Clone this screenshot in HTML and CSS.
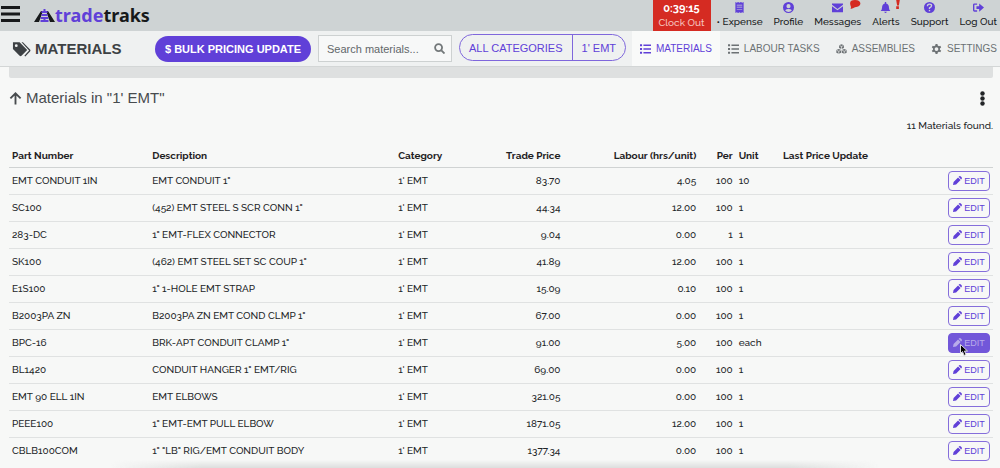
FILE: index.html
```html
<!DOCTYPE html>
<html lang="en">
<head>
<meta charset="utf-8">
<title>Materials - tradetraks</title>
<link rel="stylesheet" href="styles.css">
</head>
<body>
<svg class="defs" aria-hidden="true">
  <symbol id="pencil" viewBox="0 0 16 16"><path d="M0 16l1-5.500L9 2.500 13.500 7l-8 8zM10 1.500q2-2.500 4-.7l1.200 1.200q1.800 2-.7 4z"/></symbol>
  <symbol id="list" viewBox="0 0 16 14"><path d="M0 0h3v3H0zM5 .5h11v2H5zM0 5.500h3v3H0zM5 6h11v2H5zM0 11h3v3H0zM5 11.500h11v2H5z"/></symbol>
</svg>
<header class="topbar">
  <button class="menu" aria-label="Menu"><svg viewBox="0 0 19 18"><path d="M0 1h19v3H0zM0 7.500h19v3H0zM0 14h19v3H0z"/></svg></button>
  <a class="logo" href="#"><svg viewBox="0 0 21 14"><path d="M7 2h2L5 13H0zM12 2h2l7 11h-5z"/><path class="accent" d="M9.500 0h2v2h2v2h-6V2h2zM7.500 5h6v2h-6zM7 8h7l.5 2h-8zM9.500 10h2v1h3v2h-8v-2h3z"/></svg><span class="accent">trade</span><span>traks</span></a>
  <button class="clock"><strong>0:39:15</strong><span>Clock Out</span></button>
  <nav class="topnav">
    <a href="#"><svg viewBox="0 0 16 16"><path fill-rule="evenodd" d="M2 0l2 1 2-1 2 1 2-1 2 1 2-1v16l-2-1-2 1-2-1-2 1-2-1-2 1zM4 4v1h8V4zM4 7v1h8V7zM4 10v1h8v-1z"/></svg><span>• Expense</span></a>
    <a href="#"><svg viewBox="0 0 16 16"><path fill-rule="evenodd" d="M8 0a8 8 0 100 16A8 8 0 008 0zm0 3a3 3 0 110 6 3 3 0 010-6zM3 12q2-2 5-2t5 2q-2 2.500-5 2.500T3 12z"/></svg><span>Profile</span></a>
    <a href="#"><svg viewBox="0 0 16 16"><path d="M0 2h16v2L8 10 0 4zM0 6l8 6 8-6v9H0z"/></svg><svg class="badge" viewBox="0 0 12 10"><path d="M6 0c8 0 8 8 0 8Q4 9 1 10q1-2 0-4-2-6 5-6z"/></svg><span>Messages</span></a>
    <a href="#"><svg viewBox="0 0 16 16"><path d="M7 0h2v2q4 1 4 6 0 3 2 5H1q2-2 2-5 0-5 4-6zM6 14h4q-2 4-4 0z"/></svg><svg class="badge" viewBox="0 0 12 10"><path d="M4 0h4L7 6H5zM4 7h3v3H4z"/></svg><span>Alerts</span></a>
    <a href="#"><svg viewBox="0 0 16 16"><circle cx="8" cy="8" r="8"/><path class="cut" d="M5 6q0-3 3-3t3 2.500Q11 7 8 8.500V10"/><path class="cut" d="M8 11.500v2"/></svg><span>Support</span></a>
    <a href="#"><svg viewBox="0 0 16 16"><path d="M6 2v2H2v8h4v2H2q-2 0-2-2V4q0-2 2-2zM9 2l7 6-7 6v-4H5V6h4z"/></svg><span>Log Out</span></a>
  </nav>
</header>
<div class="toolbar">
  <h1><svg viewBox="0 0 20 16"><path fill-rule="evenodd" d="M1 1h7l8 8-6 6q-1 1-2 0L1 8zM4.500 3a1.500 1.500 0 100 3 1.500 1.500 0 000-3z"/><path d="M10 1h1.500L19 8.500q1 .8 0 2L14 16l-1-1 5-5.500z"/></svg>MATERIALS</h1>
  <button class="bulk">$ BULK PRICING UPDATE</button>
  <label class="search"><input type="text" placeholder="Search materials..." aria-label="Search materials"><svg viewBox="0 0 12 12"><circle cx="5" cy="5" r="3.800"/><path d="M8 8l3.500 3.500"/></svg></label>
  <div class="crumbs"><button>ALL CATEGORIES</button><button>1' EMT</button></div>
  <nav class="tabs">
    <a class="active" href="#"><svg><use href="#list"/></svg>MATERIALS</a>
    <a href="#"><svg><use href="#list"/></svg>LABOUR TASKS</a>
    <a href="#"><svg viewBox="0 0 16 14"><path d="M8 0l3.500 1.500v4L8 7 4.500 5.500v-4zM4 7l3.500 1.500v4L4 14 .5 12.500v-4zM12 7l3.500 1.500v4L12 14l-3.500-1.500v-4z"/><path class="facet" d="M5 2l3 1.300L11 2M8 3.300V7M1 9l3 1.300L7 9M4 10.300V14M9 9l3 1.300L15 9M12 10.300V14"/></svg>ASSEMBLIES</a>
    <a href="#"><svg viewBox="0 0 16 16"><path fill-rule="evenodd" d="M6.500 0h3l.5 2.500 2 1L14 2.700l1.500 2.600-2 1.700v2l2 1.700-1.500 2.600-2-.8-2 1-.5 2.500h-3L6 13.500l-2-1-2 .8-1.500-2.600 2-1.700V7l-2-1.700L2 2.700l2 .8 2-1zM8 5a3 3 0 100 6 3 3 0 000-6z"/></svg>SETTINGS</a>
  </nav>
</div>
<main>
  <div class="strip"></div>
  <div class="heading">
    <h2><svg viewBox="0 0 14 14"><path d="M7 14V2M1.500 7.500L7 2l5.500 5.500"/></svg>Materials in "1' EMT"</h2>
    <button class="more" aria-label="More"><svg viewBox="0 0 5 15"><circle cx="2.500" cy="2.500" r="2.200"/><circle cx="2.500" cy="7.500" r="2.200"/><circle cx="2.500" cy="12.500" r="2.200"/></svg></button>
  </div>
  <p class="found">11 Materials found.</p>
  <table>
    <colgroup><col class="c-part"><col class="c-desc"><col class="c-cat"><col class="c-price"><col class="c-labour"><col class="c-per"><col class="c-unit"><col><col class="c-edit"></colgroup>
    <thead><tr><th>Part Number</th><th>Description</th><th>Category</th><th class="num">Trade Price</th><th class="num">Labour (hrs/unit)</th><th class="num">Per</th><th>Unit</th><th>Last Price Update</th><th></th></tr></thead>
    <tbody>
      <tr><td>EMT CONDUIT 1IN</td><td>EMT CONDUIT 1"</td><td>1' EMT</td><td class="num">83.70</td><td class="num">4.05</td><td class="num">100</td><td>10</td><td></td><td class="num"><button class="edit"><svg><use href="#pencil"/></svg>EDIT</button></td></tr>
      <tr><td>SC100</td><td>(452) EMT STEEL S SCR CONN 1"</td><td>1' EMT</td><td class="num">44.34</td><td class="num">12.00</td><td class="num">100</td><td>1</td><td></td><td class="num"><button class="edit"><svg><use href="#pencil"/></svg>EDIT</button></td></tr>
      <tr><td>283-DC</td><td>1" EMT-FLEX CONNECTOR</td><td>1' EMT</td><td class="num">9.04</td><td class="num">0.00</td><td class="num">1</td><td>1</td><td></td><td class="num"><button class="edit"><svg><use href="#pencil"/></svg>EDIT</button></td></tr>
      <tr><td>SK100</td><td>(462) EMT STEEL SET SC COUP 1"</td><td>1' EMT</td><td class="num">41.89</td><td class="num">12.00</td><td class="num">100</td><td>1</td><td></td><td class="num"><button class="edit"><svg><use href="#pencil"/></svg>EDIT</button></td></tr>
      <tr><td>E1S100</td><td>1" 1-HOLE EMT STRAP</td><td>1' EMT</td><td class="num">15.09</td><td class="num">0.10</td><td class="num">100</td><td>1</td><td></td><td class="num"><button class="edit"><svg><use href="#pencil"/></svg>EDIT</button></td></tr>
      <tr><td>B2003PA ZN</td><td>B2003PA ZN EMT COND CLMP 1"</td><td>1' EMT</td><td class="num">67.00</td><td class="num">0.00</td><td class="num">100</td><td>1</td><td></td><td class="num"><button class="edit"><svg><use href="#pencil"/></svg>EDIT</button></td></tr>
      <tr><td>BPC-16</td><td>BRK-APT CONDUIT CLAMP 1"</td><td>1' EMT</td><td class="num">91.00</td><td class="num">5.00</td><td class="num">100</td><td>each</td><td></td><td class="num"><button class="edit hovered"><svg><use href="#pencil"/></svg>EDIT<svg class="cursor" viewBox="0 0 8 12"><path d="M.5.5v9l2-2 1.500 4 2-1-1.500-3.500h3z"/></svg></button></td></tr>
      <tr><td>BL1420</td><td>CONDUIT HANGER 1" EMT/RIG</td><td>1' EMT</td><td class="num">69.00</td><td class="num">0.00</td><td class="num">100</td><td>1</td><td></td><td class="num"><button class="edit"><svg><use href="#pencil"/></svg>EDIT</button></td></tr>
      <tr><td>EMT 90 ELL 1IN</td><td>EMT ELBOWS</td><td>1' EMT</td><td class="num">321.05</td><td class="num">0.00</td><td class="num">100</td><td>1</td><td></td><td class="num"><button class="edit"><svg><use href="#pencil"/></svg>EDIT</button></td></tr>
      <tr><td>PEEE100</td><td>1" EMT-EMT PULL ELBOW</td><td>1' EMT</td><td class="num">1871.05</td><td class="num">12.00</td><td class="num">100</td><td>1</td><td></td><td class="num"><button class="edit"><svg><use href="#pencil"/></svg>EDIT</button></td></tr>
      <tr><td>CBLB100COM</td><td>1" "LB" RIG/EMT CONDUIT BODY</td><td>1' EMT</td><td class="num">1377.34</td><td class="num">0.00</td><td class="num">100</td><td>1</td><td></td><td class="num"><button class="edit"><svg><use href="#pencil"/></svg>EDIT</button></td></tr>
    </tbody>
  </table>
</main>
<div class="shade"></div>
</body>
</html>
```
FILE: styles.css
```css
* { box-sizing: border-box; }
body { margin: 0; background: #f7f8f7; color: #222527; font: 500 10px/14px Raleway, Lato, sans-serif; }
button { margin: 0; padding: 0; border: 0; background: none; font: inherit; color: inherit; cursor: pointer; white-space: nowrap; flex: none; }
a { color: inherit; text-decoration: none; white-space: nowrap; }
svg { fill: currentColor; flex: none; }
h1, h2, p { margin: 0; }
.defs { position: absolute; width: 0; height: 0; }
.accent { color: #6040d8; fill: #6040d8; }

.topbar { display: flex; height: 31px; padding: 0 3px 0 1px; background: #ced3d4; color: #17191b; }
.menu { display: flex; align-items: center; padding-bottom: 3px; }
.menu svg { width: 19px; height: 18px; }
.logo { display: flex; align-items: center; margin-left: 14px; font: bold 18px/31px "Noto Sans", "Open Sans", sans-serif; }
.logo svg { width: 21px; height: 14px; }
.clock { display: flex; flex-direction: column; align-items: center; width: 58px; margin-left: auto; padding-top: 2px; background: #d52b22; color: #fff; line-height: 14px; }
.clock strong { font-size: 11px; }
.clock span { color: #f6c4bf; }
.topnav { display: flex; gap: 11px; margin-left: 6px; }
.topnav a { position: relative; display: flex; flex-direction: column; align-items: center; gap: 2px; padding-top: 2px; }
.topnav svg { width: 11px; height: 11px; color: #6040d8; }
.topnav .badge { position: absolute; top: 0; left: calc(50% + 11px); width: 12px; height: 9px; color: #d52b22; }
.topnav a:nth-child(4) .badge { left: calc(50% + 6px); }
.cut { fill: none; stroke: #ced3d4; stroke-width: 2; }

.toolbar { display: flex; align-items: center; height: 36px; padding: 0 3px 0 12px; border-bottom: 1px solid #d3d6d6; background: #eff1f1; font-family: "Liberation Sans", Arial, sans-serif; }
h1 { display: flex; flex: none; align-items: center; gap: 4px; width: 143px; font-size: 15px; line-height: 20px; color: #3d4144; }
h1 svg { width: 19px; height: 16px; }
.bulk { width: 156px; height: 26px; border-radius: 13px; background: #6040d8; color: #fff; font-size: 11px; font-weight: bold; }
.search { display: flex; flex: none; align-items: center; width: 134px; height: 27px; margin-left: 7px; padding: 0 6px 0 8px; border: 1px solid #cdd1d1; background: #f7f8f8; color: #73787a; }
.search input { flex: 1; min-width: 0; padding: 0; border: 0; outline: 0; background: none; font: 11px/16px "Liberation Sans", Arial, sans-serif; }
.search input::placeholder { color: #62676a; opacity: 1; }
.search svg { width: 11px; height: 11px; fill: none; stroke: currentColor; stroke-width: 2; }
.crumbs { display: flex; flex: none; height: 27px; margin: 0 0 2px 7px; border: 1px solid #7f67dc; border-radius: 14px; color: #6040d8; font-size: 11px; }
.crumbs button { padding: 0 9px; }
.crumbs button + button { border-left: 1px solid #7f67dc; }
.tabs { display: flex; align-self: stretch; gap: 16px; margin-left: auto; color: #6c7174; font-size: 10px; font-weight: 400; }
.tabs a { display: flex; align-items: center; gap: 5px; }
.tabs svg { width: 11px; height: 10px; }
.tabs .active { padding: 0 8px; margin-right: -8px; background: #f9faf9; color: #6040d8; }
.facet { fill: none; stroke: #eff1f1; stroke-width: 1; }

main { padding: 0 7px 4px 9px; }
.strip { height: 11px; border-radius: 0 0 2px 2px; background: #dee0e0; }
.heading { display: flex; align-items: center; justify-content: space-between; height: 40px; padding-right: 8px; }
h2 { display: flex; align-items: center; gap: 4px; font: 15px/20px "Liberation Sans", Arial, sans-serif; color: #474b4e; }
h2 svg { width: 13px; height: 14px; fill: none; stroke: currentColor; stroke-width: 2; }
.more svg { display: block; width: 5px; height: 15px; }
.found { padding-bottom: 11px; text-align: right; line-height: 16px; }

table { width: 100%; table-layout: fixed; border-collapse: collapse; }
th, td { height: 27px; padding: 0 3px; border-bottom: 1px solid #e0e2e2; text-align: left; white-space: nowrap; }
th { height: 22px; border-color: #d0d3d3; color: #1f2224; font-weight: 700; }
.num { text-align: right; }
.c-part { width: 14.25%; }
.c-desc { width: 25%; }
.c-cat { width: 8%; }
.c-price { width: 9.1%; }
.c-labour { width: 13.8%; }
.c-per { width: 3.7%; }
.c-unit { width: 4.5%; }
.c-edit { width: 6%; }
tbody tr:last-child td { border-bottom: 0; }
.edit { position: relative; display: inline-flex; align-items: center; justify-content: center; gap: 2px; width: 42px; height: 20px; border: 1px solid #856edb; border-radius: 4px; color: #6040d8; font: 9px/14px "Liberation Sans", Arial, sans-serif; vertical-align: middle; }
.edit svg { width: 9px; height: 9px; }
.edit.hovered { background: #7257d9; border-color: #7257d9; color: #b9abea; }
.edit .cursor { position: absolute; top: 10px; left: 11px; width: 8px; height: 12px; fill: #000; stroke: #ddd; stroke-width: 1; }
.shade { position: fixed; right: 12%; bottom: 0; left: 11%; height: 8px; background: linear-gradient(90deg, transparent, #dcdedd 12%, #dcdedd 88%, transparent); -webkit-mask: linear-gradient(transparent, #000); mask: linear-gradient(transparent, #000); pointer-events: none; }
```
